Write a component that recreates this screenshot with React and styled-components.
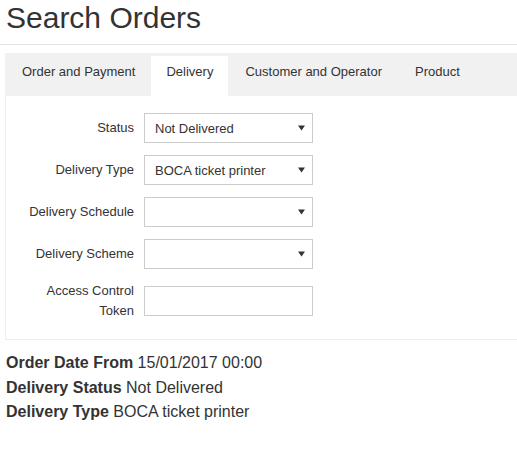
import React from "react";
import styled, { createGlobalStyle } from "styled-components";

const Global = createGlobalStyle`
  html, body { margin: 0; padding: 0; background: #fff; overflow: hidden; }
  body { font-family: "Liberation Sans", Arial, sans-serif; color: #333; }
`;

const Page = styled.div`
  width: 517px;
`;

const Title = styled.h1`
  margin: 0;
  padding: 1px 6px 10px;
  font-size: 30px;
  line-height: 33px;
  font-weight: 400;
  color: #333;
  border-bottom: 1px solid #e5e5e5;
`;

const Tabs = styled.div`
  margin: 8px -12px 0 5px;
`;

const TabBar = styled.div`
  display: flex;
  background: #f1f1f1;
  height: 43px;
  align-items: flex-end;
`;

const Tab = styled.div`
  height: 40px;
  box-sizing: border-box;
  padding: 6px 16px 0 17px;
  line-height: 20px;
  font-size: 13px;
  color: #333;
  background: ${(p) => (p.$active ? "#fff" : "transparent")};
  padding-right: ${(p) => (p.$active ? "15px" : "16px")};
  padding-left: ${(p) => (p.$active ? "15px" : "17px")};
`;

const Panel = styled.div`
  border-left: 1px solid #eee;
  border-bottom: 1px solid #eee;
  padding: 17px 0 18px;
`;

const Form = styled.div`
  display: grid;
  grid-template-columns: 128px 169px;
  column-gap: 10px;
  row-gap: 12px;
`;

const Label = styled.div`
  text-align: right;
  font-size: 13px;
  color: #333;
  line-height: ${(p) => (p.$multi ? "20px" : "30px")};
`;

const SelectBox = styled.div`
  height: 30px;
  box-sizing: border-box;
  border: 1px solid #ccc;
  display: flex;
  align-items: center;
  justify-content: space-between;
  padding: 0 7px 0 10px;
  font-size: 13px;
  color: #333;
  background: #fff;
`;

const TextBox = styled.div`
  height: 30px;
  box-sizing: border-box;
  border: 1px solid #ccc;
  margin-top: 5px;
  background: #fff;
`;

const Summary = styled.div`
  margin-top: 11px;
  padding-left: 6px;
  font-size: 16px;
  line-height: 24.5px;
  color: #333;
`;

const Key = styled.b`
  font-weight: 700;
`;

const Arrow = () => (
  <svg width="7" height="6" viewBox="0 0 7 6">
    <path d="M0 0.5 L7 0.5 L3.5 5.5 Z" fill="#333" />
  </svg>
);

const Select = ({ value }) => (
  <SelectBox>
    <span>{value}</span>
    <Arrow />
  </SelectBox>
);

export default function App() {
  return (
    <Page>
      <Global />
      <Title>Search Orders</Title>
      <Tabs>
        <TabBar>
          <Tab>Order and Payment</Tab>
          <Tab $active>Delivery</Tab>
          <Tab>Customer and Operator</Tab>
          <Tab>Product</Tab>
        </TabBar>
        <Panel>
          <Form>
            <Label>Status</Label>
            <Select value="Not Delivered" />
            <Label>Delivery Type</Label>
            <Select value="BOCA ticket printer" />
            <Label>Delivery Schedule</Label>
            <Select value="" />
            <Label>Delivery Scheme</Label>
            <Select value="" />
            <Label $multi>
              Access Control
              <br />
              Token
            </Label>
            <TextBox />
          </Form>
        </Panel>
      </Tabs>
      <Summary>
        <div>
          <Key>Order Date From</Key> 15/01/2017 00:00
        </div>
        <div>
          <Key>Delivery Status</Key> Not Delivered
        </div>
        <div>
          <Key>Delivery Type</Key> BOCA ticket printer
        </div>
      </Summary>
    </Page>
  );
}
